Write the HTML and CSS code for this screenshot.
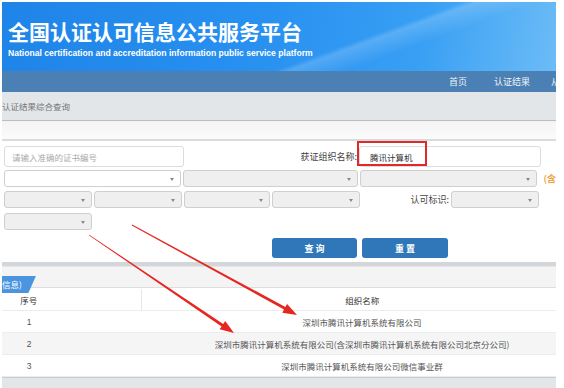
FILE: index.html
```html
<!DOCTYPE html>
<html lang="zh-CN">

<head>
    <meta charset="UTF-8">
    <meta name="viewport" content="width=device-width, initial-scale=1.0">
    <title>认证结果综合查询</title>
    <link rel="stylesheet" href="styles.css">
</head>

<body>
    <div class="page">
        <div class="banner">
            <h1>全国认证认可信息公共服务平台</h1>
            <p class="banner-sub">National certification and accreditation information public service platform</p>
        </div>

        <div class="nav">
            <a href="#">首页</a>
            <a href="#">认证结果</a>
            <a href="#" class="cut">从</a>
        </div>

        <div class="crumb">认证结果综合查询</div>
        <div class="strip"></div>

        <form class="search">
            <div class="row">
                <input type="text" class="field cert-no" placeholder="请输入准确的证书编号">
                <label class="org-label">获证组织名称:</label>
                <div class="org-wrap">
                    <input type="text" class="field org-name" value="腾讯计算机">
                    <span class="mark"></span>
                </div>
            </div>
            <div class="row">
                <div class="select w178 white"></div>
                <div class="select w176"></div>
                <div class="select w177"></div>
                <span class="hint">(含</span>
            </div>
            <div class="row">
                <div class="select w88"></div>
                <div class="select w88"></div>
                <div class="select w86"></div>
                <div class="select w88"></div>
                <label class="mark-label">认可标识:</label>
                <div class="select w88"></div>
            </div>
            <div class="row">
                <div class="select w88"></div>
            </div>
            <div class="buttons">
                <button type="button">查 询</button>
                <button type="button" class="reset">重 置</button>
            </div>
        </form>

        <div class="divider"></div>

        <div class="tabbar">
            <span class="tab">信息)</span>
        </div>

        <table class="results">
            <thead>
                <tr>
                    <th class="num">序号</th>
                    <th class="name">组织名称</th>
                </tr>
            </thead>
            <tbody>
                <tr>
                    <td class="num">1</td>
                    <td class="name">深圳市腾讯计算机系统有限公司</td>
                </tr>
                <tr class="alt">
                    <td class="num">2</td>
                    <td class="name">深圳市腾讯计算机系统有限公司(含深圳市腾讯计算机系统有限公司北京分公司)</td>
                </tr>
                <tr>
                    <td class="num">3</td>
                    <td class="name">深圳市腾讯计算机系统有限公司微信事业群</td>
                </tr>
            </tbody>
        </table>
        <div class="footer-bar"></div>
    </div>

    <svg class="arrows" width="564" height="388" viewBox="0 0 564 388">
        <polygon points="132.2,224.6 285.4,307 287.1,303.9 297,315 282.3,312.7 284,309.6 131.8,225.4" />
        <polygon points="89.2,234.7 223.2,324 225.2,321.1 234,333 219.6,329.3 221.6,326.4 88.8,235.3" />
    </svg>
</body>

</html>
```

FILE: styles.css
```css
body {
    margin: 0;
    background-color: #fff;
    font-family: "Noto Sans CJK SC", "Liberation Sans", sans-serif;
    width: 564px;
    height: 388px;
    overflow: hidden;
    position: relative;
}

.page {
    width: 554px;
    margin: 2px 0 0 2px;
    overflow: hidden;
}

/* banner */
.banner {
    height: 69px;
    box-sizing: border-box;
    padding: 14px 0 0 6px;
    background:
        linear-gradient(160deg, rgba(255, 255, 255, 0) 62%, rgba(255, 255, 255, 0.18) 64%, rgba(255, 255, 255, 0) 72%),
        linear-gradient(100deg, #1f84e8 0%, #2790f0 45%, #389ff4 75%, #6cbcf6 100%);
}

.banner h1 {
    margin: 0;
    font-size: 21px;
    line-height: 30px;
    font-weight: bold;
    color: #fff;
    letter-spacing: 0;
}

.banner-sub {
    margin: 2px 0 0 0;
    font-family: "Liberation Sans", Arial, sans-serif;
    font-size: 8.6px;
    font-weight: bold;
    color: #fff;
}

/* nav */
.nav {
    height: 21px;
    background-color: #4a80b3;
    display: flex;
    padding-left: 429px;
}

.nav a {
    flex: 0 0 54px;
    text-align: center;
    font-size: 9px;
    line-height: 21px;
    color: #eef3f8;
    text-decoration: none;
    white-space: nowrap;
}

.nav a.cut {
    flex: 0 0 auto;
    margin-left: 12px;
}

.crumb {
    height: 28px;
    line-height: 28px;
    background-color: #e2e6e9;
    border-bottom: 1px solid #b9bdc0;
    font-size: 8.5px;
    color: #777;
}

.strip {
    height: 18px;
    background: linear-gradient(#f4f4f4, #fbfbfb);
    border-bottom: 2px solid #d8dcdf;
}

/* search form */
.search {
    padding: 5px 0 4px 2px;
}

.row {
    display: flex;
    gap: 2px;
    margin-bottom: 4px;
    align-items: center;
}

.row:first-child {
    margin-bottom: 3px;
}

.row:nth-child(3) {
    margin-bottom: 5px;
}

.field {
    box-sizing: border-box;
    height: 21px;
    border: 1px solid #dcdcdc;
    border-radius: 3px;
    padding: 0 7px;
    font-family: "Noto Sans CJK SC", sans-serif;
    font-size: 8.5px;
    color: #333;
    outline: none;
}

.field::placeholder {
    color: #aaa;
}

.cert-no {
    width: 180px;
}

.org-label {
    width: 171px;
    text-align: right;
    font-size: 9px;
    line-height: 21px;
    color: #444;
}

.org-wrap {
    display: flex;
    position: relative;
}

.org-name {
    width: 182px;
    padding-left: 10px;
}

.mark {
    position: absolute;
    left: -2px;
    top: -5px;
    width: 66px;
    height: 21px;
    border: 2px solid #e02a2a;
}

.select {
    box-sizing: border-box;
    height: 17px;
    border: 1px solid #cfcfcf;
    border-radius: 3px;
    background-color: #efefef;
    position: relative;
}

.select.white {
    background-color: #fff;
}

.select::after {
    content: "";
    position: absolute;
    right: 6px;
    top: 7px;
    border-left: 2px solid transparent;
    border-right: 2px solid transparent;
    border-top: 3px solid #888;
}

.w178 { width: 178px; }
.w176 { width: 176px; }
.w177 { width: 177px; }
.w88 { width: 88px; }
.w86 { width: 86px; }

.hint {
    margin-left: 5px;
    font-size: 9px;
    line-height: 17px;
    font-weight: bold;
    color: #f0a33c;
}

.mark-label {
    width: 87px;
    text-align: right;
    font-size: 9px;
    line-height: 17px;
    color: #444;
}

.buttons {
    display: flex;
    gap: 5px;
    margin: 8px 0 0 268px;
}

.buttons button {
    width: 85px;
    height: 20px;
    border: none;
    border-radius: 3px;
    background-color: #2f77b8;
    color: #fff;
    font-family: "Noto Sans CJK SC", sans-serif;
    font-size: 9px;
    font-weight: bold;
    cursor: pointer;
}

.buttons button.reset {
    width: 86px;
}

.divider {
    height: 4px;
    background-color: #d3d7da;
}

/* result tab */
.tabbar {
    height: 22px;
    background-color: #f4f4f4;
    border-top: 1px solid #e6e6e6;
    border-bottom: 1px solid #dedede;
    padding-top: 2px;
    box-sizing: border-box;
    margin-bottom: 1px;
}

.tab {
    display: inline-block;
    height: 17px;
    line-height: 17px;
    padding: 0 14px 0 0;
    font-size: 8.5px;
    color: #fff;
    background-color: #4b94e0;
    clip-path: polygon(0 0, 100% 0, 78% 100%, 0 100%);
}

/* table */
.results {
    width: 581px;
    border-collapse: collapse;
    font-size: 8.5px;
    color: #555;
}

.results th,
.results td {
    height: 21px;
    padding: 0;
    text-align: center;
    font-weight: normal;
    border-bottom: 1px solid #ececec;
}

.results th {
    color: #333;
    height: 21px;
}

.results .num {
    width: 139px;
    padding-right: 85px;
    box-sizing: border-box;
    font-family: "Liberation Sans", "Noto Sans CJK SC", sans-serif;
}

.results th.num {
    font-family: "Noto Sans CJK SC", sans-serif;
    border-right: 1px solid #e6e6e6;
}

.results .name {
    padding-left: 0;
    white-space: nowrap;
}

.results tr.alt td {
    background-color: #f5f5f5;
}

.footer-bar {
    height: 12px;
    background-color: #e3e6e9;
    border-top: 1px solid #c9cdd0;
}

.arrows {
    position: absolute;
    left: 0;
    top: 0;
}

.arrows polygon {
    fill: #e62620;
}
```
